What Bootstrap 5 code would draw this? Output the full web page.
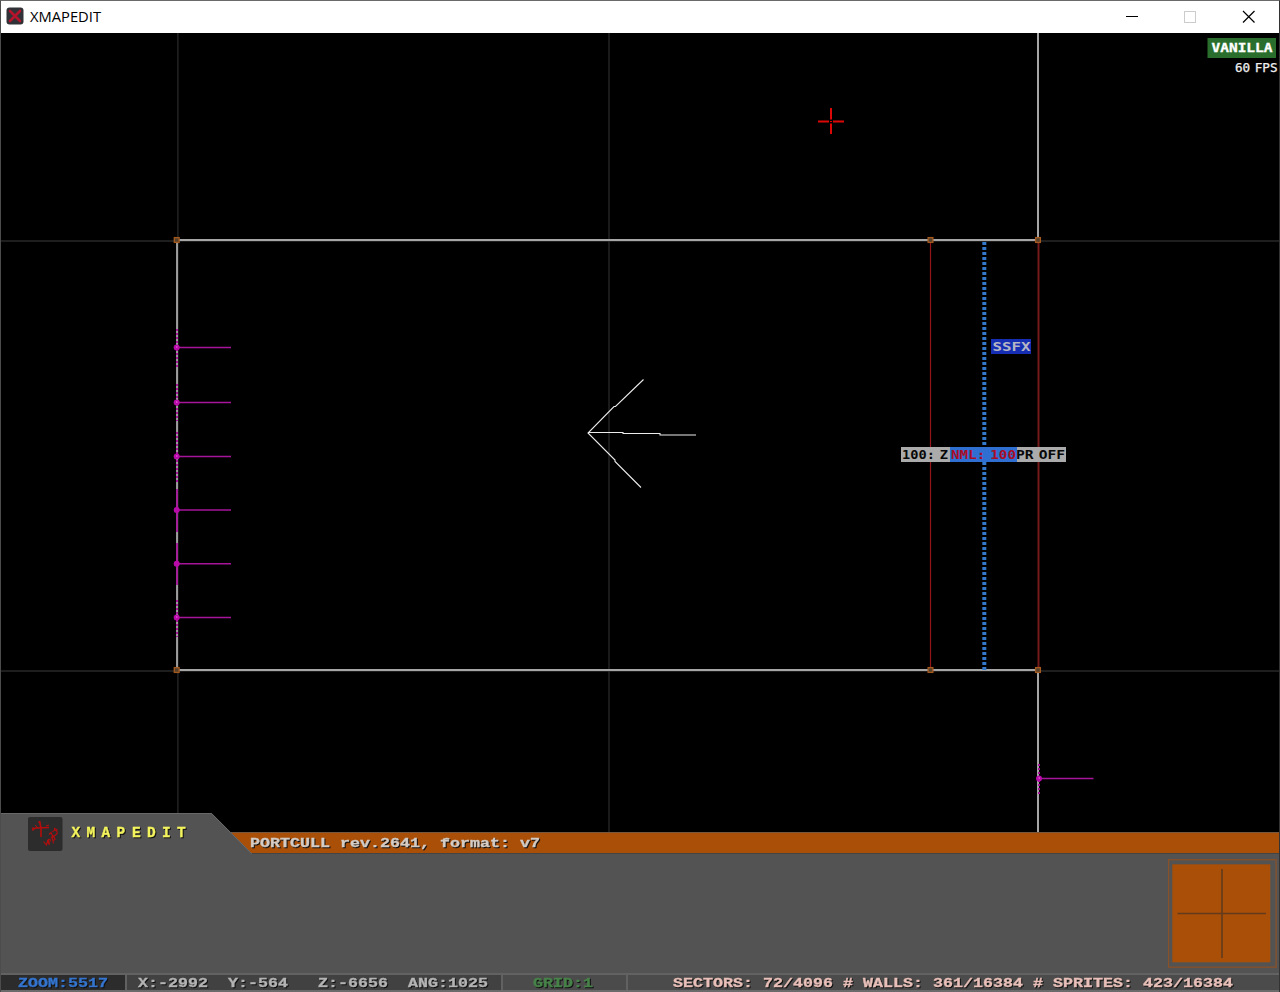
<!DOCTYPE html>
<html lang="en">
<head>
<meta charset="utf-8">
<title>XMAPEDIT</title>
<link href="https://cdn.jsdelivr.net/npm/bootstrap@5.3.0/dist/css/bootstrap.min.css" rel="stylesheet">
<style>
body{background:#000;overflow:hidden}
.app-window{width:1280px;height:992px;border-left:1px solid #4c4c4c;border-right:1px solid #333;border-top:1px solid #6a6a6a;background:#000}
svg{display:block;flex:none}
.title-bar{height:32px;background:#fff}
.caption{font-family:"Open Sans",sans-serif;font-size:15.2px;fill:#000}
.map-view{height:780px}
.map-view svg{overflow:visible}
.pix{font-family:"Liberation Mono",monospace;font-weight:700;font-size:13.5px;stroke-width:.35px}
.shade{filter:drop-shadow(1px 1px 0 #101010)}
.tag{font-family:"DejaVu Sans Mono",monospace;font-weight:700;font-size:12px}
.tag-space{word-spacing:-3px}
.panel-head{height:41px}
.panel-body{height:120px;background:#535353}
.preview{width:110px;height:110px;margin:4px 1px 0 0}
.status-bar{height:19px;background:#4b4b4b;border-top:2px solid #626262;border-bottom:2px solid #6b6b6b}
.status-cell{border-right:2px solid #616161}
.cell-zoom{width:126px;background:#2c2c2c}
.cell-pos{width:376px;background:#414141}
.cell-grid{width:125px}
</style>
</head>
<body>
<div class="app-window d-flex flex-column">
  <header class="title-bar d-flex justify-content-between">
    <svg width="150" height="32" viewBox="1 1 150 32">
      <rect x="6.5" y="7.5" width="17" height="17" rx="3" fill="#303237"/>
      <path d="M10 11L20 21M20 11L10 21" stroke="#b3142b" stroke-width="2.6" stroke-linecap="round"/>
      <text class="caption" x="30" y="22" textLength="71" lengthAdjust="spacingAndGlyphs">XMAPEDIT</text>
    </svg>
    <svg width="179" height="32" viewBox="1100 1 179 32" fill="none">
      <path d="M1126 16.5h12" stroke="#000"/>
      <rect x="1184.500" y="11.500" width="11" height="11" stroke="#ccc"/>
      <path d="M1243 11L1254.500 22.500M1254.500 11L1243 22.500" stroke="#000" stroke-width="1.200"/>
    </svg>
  </header>

  <main class="map-view">
    <svg width="1278" height="780" viewBox="1 33 1278 780" fill="none">
      <path d="M177.900 33V832M609 33V832M1 241H1279M1 671H1279" stroke="#292929" stroke-width="1.300"/>
      <path d="M177 240H1038M177 670H1038M1038 33V240M1038 670V832" stroke="#a6a6a6" stroke-width="2"/>
      <path d="M177 240V670" stroke="#c9c9c9" stroke-width="1.500"/>
      <path d="M930.500 241V669" stroke="#941418" stroke-width="1.200"/>
      <path d="M1038.500 241V669" stroke="#751b1b" stroke-width="2"/>
      <path d="M984.300 242V670" stroke="#3478cc" stroke-width="4" stroke-dasharray="3 2"/>
      <path d="M643.500 379.500L615.500 406.500L614 406.500L588 433L615 460V461.500L641 487.500M588 432.500H623V433.500H660V435H696" stroke="#ececec" stroke-width="1.100"/>
      <path d="M831 108V119.500M831 123.500V134M818 121.500H829M833 121.500H844" stroke="#dc0808" stroke-width="2"/>
      <path d="M830 121.500h2" stroke="#e00000" stroke-width="1"/>
      <g stroke="#a6149a" stroke-width="1.400">
        <path d="M177 347.500h54M177 402.500h54M177 456.500h54M177 510h54M177 563.800h54M177 617.500h54M1039 778.500h54.500"/>
        <path d="M177 489V532M177 543V585" stroke-width="1.800"/>
        <path d="M177 329V367M177 384V421M177 432V482M177 600V637M1039 764V796" stroke-width="2" stroke-dasharray="2 2"/>
      </g>
      <g fill="#b80aa8"><circle cx="176.700" cy="347.500" r="3"/><circle cx="176.700" cy="402.500" r="3"/><circle cx="176.700" cy="456.500" r="3"/><circle cx="176.700" cy="510" r="3"/><circle cx="176.700" cy="563.800" r="3"/><circle cx="176.700" cy="617.500" r="3"/><circle cx="1039" cy="778.500" r="3"/></g>
      <path d="M176 347h1.500M176 402h1.500M176 456h1.500M176 617h1.500M1038.500 778h1.500" stroke="#f07ae8"/>
      <g fill="#55402c" stroke="#a45a1e" stroke-width="1.300">
        <rect x="174.300" y="237.600" width="4.800" height="4.800"/><rect x="928.100" y="237.600" width="4.800" height="4.800"/><rect x="1035.600" y="237.600" width="4.800" height="4.800"/>
        <rect x="174.300" y="667.600" width="4.800" height="4.800"/><rect x="928.100" y="667.600" width="4.800" height="4.800"/><rect x="1035.600" y="667.600" width="4.800" height="4.800"/>
      </g>
      <rect x="991" y="339" width="40" height="15" fill="#162eb4"/>
      <text class="tag" x="992.500" y="350.800" fill="#b5b5c4" textLength="38" lengthAdjust="spacingAndGlyphs">SSFX</text>
      <rect x="901" y="447" width="165" height="15" fill="#ababab"/>
      <text class="tag tag-space" x="902" y="458.700" fill="#080808" textLength="46" lengthAdjust="spacingAndGlyphs">100: Z</text>
      <text class="tag tag-space" x="1016" y="458.700" fill="#080808" textLength="49" lengthAdjust="spacingAndGlyphs">PR OFF</text>
      <rect x="950" y="447" width="67" height="15" fill="#2f6fd2"/>
      <text class="tag tag-space" x="951" y="458.700" fill="#a90d26" textLength="65" lengthAdjust="spacingAndGlyphs">NML: 100</text>
      <rect x="1207.500" y="38" width="68.500" height="20" fill="#2a6e2d"/>
      <text class="tag" x="1211.500" y="51.700" fill="#fff" stroke="#fff" stroke-width=".3" textLength="61" lengthAdjust="spacingAndGlyphs">VANILLA</text>
      <text class="tag tag-space" style="font-weight:400" x="1235" y="72" fill="#eee" stroke="#eee" stroke-width=".25" textLength="42.500" lengthAdjust="spacingAndGlyphs">60 FPS</text>
    </svg>
  </main>

  <section class="panel-head">
    <svg width="1278" height="41" viewBox="1 813 1278 41">
      <rect x="200" y="832" width="1079" height="21" fill="#aa4f07"/>
      <path d="M225 832.500H1279" stroke="#77583f"/>
      <path d="M240 853.500H1279" stroke="#444"/>
      <path d="M1 813H211.500L252 853.500V854H1Z" fill="#535353"/>
      <path d="M1 813.500H211.500L251.500 853.500" fill="none" stroke="#686868"/>
      <rect x="28" y="817" width="34.500" height="34" rx="2" fill="#2c2c2c"/>
      <g fill="none" stroke="#b50d0d">
        <path d="M32 829.500L36 828L49 827.500" stroke-width="1.600"/>
        <path d="M39.500 821L41 828L41 837" stroke-width="1.600"/>
        <path d="M35 825l3 3M38 822l3 1M46 826l3-1M33 827v4" stroke-width="1"/>
        <path d="M43.500 841.500l3 3.500 1-4 2 4M48 839.500l1.500 4.500M48 839.500q3-1 2 2M52 837l1.500 6.500M51 838l3-1.500 1 3-2 1M52.500 832q2-3 4-1t-1 4-4 1M54.500 830v-1.500l3 1.500M49 834.500l2-2 2 4" stroke-width="1.100"/>
      </g>
      <text class="pix shade" fill="#f4f45e" stroke="#f4f45e" x="71.500 86.500 101.500 116.500 132 147 162 177" y="837" style="font-size:14.500px">XMAPEDIT</text>
      <text class="pix shade" x="250" y="847" fill="#d4ccc5" stroke="#d4ccc5" textLength="290" lengthAdjust="spacingAndGlyphs">PORTCULL rev.2641, format: v7</text>
    </svg>
  </section>
  <section class="panel-body d-flex justify-content-end">
    <svg class="preview" width="110" height="110" viewBox="1168 858 110 110">
      <rect x="1168.600" y="859.700" width="107.500" height="107.500" fill="none" stroke="#87512a" stroke-width="1.300"/>
      <rect x="1172.300" y="864.300" width="98" height="98" fill="#aa4f07"/>
      <path d="M1222 869V958M1177.500 913.500H1266" stroke="#633b1c" stroke-width="1.600"/>
    </svg>
  </section>
  <footer class="status-bar d-flex overflow-hidden">
    <div class="status-cell cell-zoom"><svg width="124" height="15" viewBox="1 975 124 15"><text class="pix shade" x="18" y="986.500" fill="#3475cf" stroke="#3475cf" textLength="90" lengthAdjust="spacingAndGlyphs">ZOOM:5517</text></svg></div>
    <div class="status-cell cell-pos"><svg width="374" height="15" viewBox="127 975 374 15"><g class="pix shade" fill="#b4b4b4" stroke="#b4b4b4"><text x="138" y="986.500" textLength="70" lengthAdjust="spacingAndGlyphs">X:-2992</text><text x="228" y="986.500" textLength="60" lengthAdjust="spacingAndGlyphs">Y:-564</text><text x="318" y="986.500" textLength="70" lengthAdjust="spacingAndGlyphs">Z:-6656</text><text x="408" y="986.500" textLength="80" lengthAdjust="spacingAndGlyphs">ANG:1025</text></g></svg></div>
    <div class="status-cell cell-grid"><svg width="123" height="15" viewBox="503 975 123 15"><text class="pix shade" x="533" y="986.500" fill="#478349" stroke="#478349" textLength="60" lengthAdjust="spacingAndGlyphs">GRID:1</text></svg></div>
    <div class="flex-grow-1"><svg width="650" height="15" viewBox="628 975 650 15"><text class="pix shade" x="673" y="986.500" fill="#e9c0b9" stroke="#e9c0b9" textLength="560" lengthAdjust="spacingAndGlyphs">SECTORS: 72/4096 # WALLS: 361/16384 # SPRITES: 423/16384</text></svg></div>
  </footer>
</div>
<script src="https://cdn.jsdelivr.net/npm/bootstrap@5.3.0/dist/js/bootstrap.bundle.min.js"></script>
</body>
</html>
